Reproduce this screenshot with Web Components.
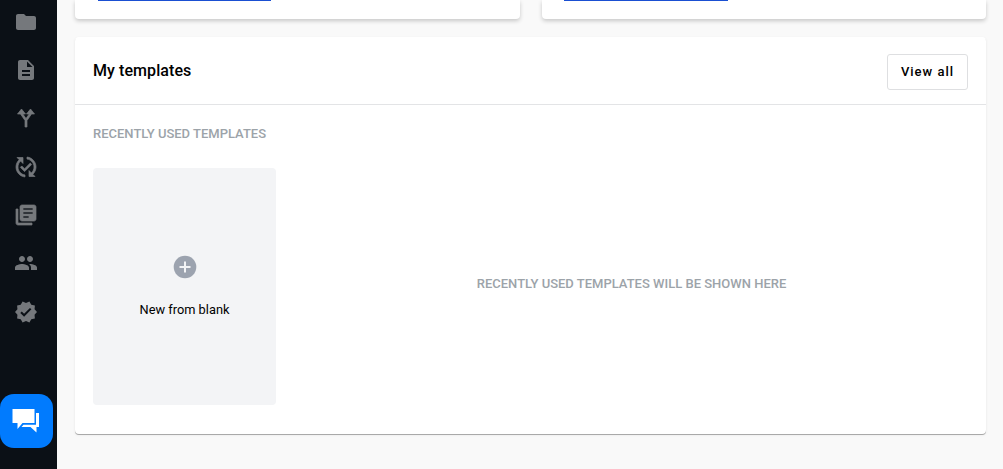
<!DOCTYPE html>
<html>
<head>
<meta charset="utf-8">
<title>My templates</title>
<style>
  html, body { margin: 0; height: 100%; overflow: hidden; }
  body { font-family: Roboto, "Liberation Sans", sans-serif; background: #f9f9f9; }
</style>
</head>
<body>
<app-shell>
  <side-nav slot="nav"></side-nav>
  <top-cards></top-cards>
  <templates-card></templates-card>
</app-shell>

<script>
const ICONS = [
  { d: 'M10 4H4c-1.1 0-1.99.9-1.99 2L2 18c0 1.1.9 2 2 2h16c1.1 0 2-.9 2-2V8c0-1.1-.9-2-2-2h-8l-2-2z' },
  { d: 'M14 2H6c-1.1 0-1.99.9-1.99 2L4 20c0 1.1.89 2 1.99 2H18c1.1 0 2-.9 2-2V8l-6-6zm2 16H8v-2h8v2zm0-4H8v-2h8v2zm-3-5V3.5L18.5 9H13z' },
  { d: 'M11 21v-6.500L6.500 8H3.500l4-5 4 5H8.800L12 12.500 15.200 8H12.500l4-5 4 5h-3L13 14.500V21z', bold: true },
  { d: 'M17.66 9.53l-7.07 7.07-4.24-4.24 1.41-1.41 2.83 2.83 5.66-5.66 1.41 1.41zM4 12c0-2.33 1.02-4.42 2.62-5.88L9 8.5v-6H3l2.2 2.2C3.24 6.52 2 9.11 2 12c0 5.19 3.95 9.45 9 9.95v-2.02c-3.94-.49-7-3.86-7-7.93zm18 0c0-5.19-3.95-9.45-9-9.95v2.02c3.94.49 7 3.86 7 7.93 0 2.33-1.02 4.42-2.62 5.88L15 15.5v6h6l-2.2-2.2c1.96-1.82 3.2-4.41 3.2-7.3z', bold: true },
  { d: 'M4 6H2v14c0 1.1.9 2 2 2h14v-2H4V6zm16-4H8c-1.1 0-2 .9-2 2v12c0 1.1.9 2 2 2h12c1.1 0 2-.9 2-2V4c0-1.1-.9-2-2-2zm-1 9H9V9h10v2zm-4 4H9v-2h6v2zm4-8H9V5h10v2z', bold: true },
  { d: 'M16 11c1.66 0 2.99-1.34 2.99-3S17.66 5 16 5c-1.66 0-3 1.34-3 3s1.34 3 3 3zm-8 0c1.66 0 2.99-1.34 2.99-3S9.66 5 8 5C6.34 5 5 6.34 5 8s1.34 3 3 3zm0 2c-2.33 0-7 1.17-7 3.5V19h14v-2.5c0-2.33-4.67-3.5-7-3.5zm8 0c-.29 0-.62.02-.97.05 1.16.84 1.97 1.97 1.97 3.45V19h6v-2.5c0-2.33-4.67-3.5-7-3.5z' },
  { d: 'M23 12l-2.44-2.79.34-3.69-3.61-.82-1.89-3.2L12 2.96 8.6 1.5 6.71 4.69 3.1 5.5l.34 3.7L1 12l2.44 2.79-.34 3.7 3.61.82L8.6 22.5l3.4-1.47 3.4 1.46 1.89-3.19 3.61-.82-.34-3.69L23 12zm-12.91 4.72l-3.8-3.81 1.48-1.48 2.32 2.33 5.85-5.87 1.48 1.48-7.33 7.35z' }
];

class AppShell extends HTMLElement {
  constructor() {
    super();
    this.attachShadow({ mode: 'open' });
    this.shadowRoot.innerHTML = `
      <style>
        :host { display: flex; height: 469px; }
        main { flex: 1; padding: 0 17px 0 18px; display: flex; flex-direction: column; gap: 18px; }
      </style>
      <slot name="nav"></slot>
      <main><slot></slot></main>
    `;
  }
}

class SideNav extends HTMLElement {
  constructor() {
    super();
    this.attachShadow({ mode: 'open' });
    const items = ICONS.map(i => `<svg class="${i.bold ? 'bold' : ''}" viewBox="0 0 24 24" width="24" height="24"><path d="${i.d}"/></svg>`).join('');
    this.shadowRoot.innerHTML = `
      <style>
        :host { display: flex; flex-direction: column; width: 57px; flex: none; background: #0b1016; }
        nav { display: flex; flex-direction: column; gap: 24.400px; margin: 9.500px 0 0 14px; }
        svg { display: block; fill: #75787c; }
        svg.bold { stroke: #75787c; stroke-width: .7; }
        button {
          margin: auto 0 21px 0; width: 53px; height: 54px; padding: 0; border: 0;
          border-radius: 14px; background: #017bfe;
          display: flex; align-items: center; justify-content: center;
        }
        button svg { fill: #fff; }
      </style>
      <nav>${items}</nav>
      <button aria-label="Chat">
        <svg viewBox="11.500 406 30 30" width="30" height="30">
          <path d="M12 409h22v14H22l-5 6v-6h-5z"/>
          <path d="M35.500 413h3v14H36v5.500l-6-5.500H21l2-2.300h12.500z"/>
        </svg>
      </button>
    `;
  }
}

class TopCards extends HTMLElement {
  constructor() {
    super();
    this.attachShadow({ mode: 'open' });
    this.shadowRoot.innerHTML = `
      <style>
        :host { display: grid; grid-template-columns: 445px 444px; gap: 22px; height: 19px; flex: none; }
        div { background: #fff; border-radius: 0 0 4px 4px; box-shadow: 0 2px 4px rgba(0,0,0,.2); padding: 0 0 0 23px; }
        div + div { padding-left: 22px; }
        i { display: block; height: 1px; background: #1a4fd2; }
      </style>
      <div><i style="width:173px"></i></div>
      <div><i style="width:164px"></i></div>
    `;
  }
}

class TemplatesCard extends HTMLElement {
  constructor() {
    super();
    this.attachShadow({ mode: 'open' });
    this.shadowRoot.innerHTML = `
      <style>
        :host {
          display: flex; flex-direction: column; height: 397px; flex: none; box-sizing: border-box;
          background: #fff; border-radius: 4px;
          box-shadow: 0 1px 0 #a9a9a9, 0 1px 3px rgba(0,0,0,.08);
        }
        header {
          height: 68px; flex: none; box-sizing: border-box; padding: 0 18px;
          display: flex; align-items: center; justify-content: space-between;
          border-bottom: 1px solid #e3e4e6;
        }
        h2 { margin: 0; font-size: 16px; font-weight: 500; letter-spacing: .08px; color: #000; }
        button {
          width: 81px; height: 36px; padding: 0; margin-top: 2px; background: #fff; border: 1px solid #dedfe1; border-radius: 3px;
          font: 500 13px Roboto, sans-serif; letter-spacing: 1px; color: #000;
        }
        .body { flex: 1; display: flex; flex-direction: column; padding: 22px 18px 29px; }
        .label { font-size: 13px; font-weight: 500; line-height: 14px; color: #9ca3a9; }
        .row { flex: 1; display: flex; margin-top: 27px; }
        .blank {
          width: 183px; flex: none; background: #f3f4f6; border-radius: 4px; box-sizing: border-box; padding-bottom: 2px;
          display: flex; flex-direction: column; align-items: center; justify-content: center; gap: 23px;
          font-size: 12.800px; font-weight: 450; line-height: 15px; color: #000;
        }
        .blank svg { display: block; }
        .empty { flex: 1; display: flex; align-items: center; justify-content: center; padding: 0 0 6px 19px; }
      </style>
      <header>
        <h2>My templates</h2>
        <button>View all</button>
      </header>
      <div class="body">
        <div class="label">RECENTLY USED TEMPLATES</div>
        <div class="row">
          <div class="blank">
            <svg viewBox="0 0 24 24" width="24" height="24">
              <circle cx="12" cy="12" r="11.300" fill="#9ca3af"/>
              <path d="M11 6.500h2V11h4.500v2H13v4.500h-2V13H6.500v-2H11z" fill="#f3f4f6"/>
            </svg>
            <span>New from blank</span>
          </div>
          <div class="empty label">RECENTLY USED TEMPLATES WILL BE SHOWN HERE</div>
        </div>
      </div>
    `;
  }
}

customElements.define('app-shell', AppShell);
customElements.define('side-nav', SideNav);
customElements.define('top-cards', TopCards);
customElements.define('templates-card', TemplatesCard);
</script>
</body>
</html>
